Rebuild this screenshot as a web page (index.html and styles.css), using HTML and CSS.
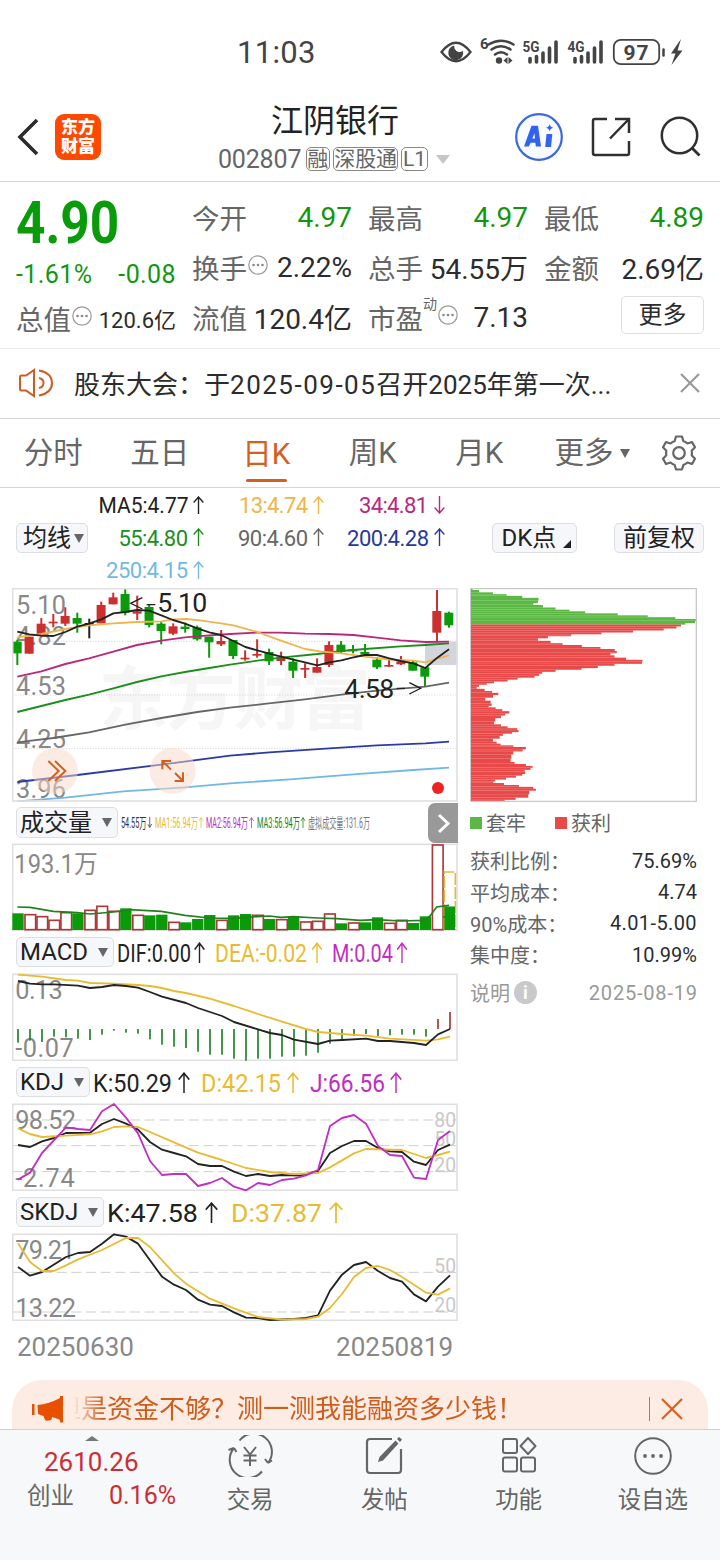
FILE: index.html
```html
<!DOCTYPE html>
<html lang="zh-CN">
<head>
<meta charset="utf-8">
<title>江阴银行 002807</title>
<link rel="stylesheet" href="styles.css">
</head>
<body>
<svg class="defs" width="0" height="0">
  <defs>
    <symbol id="up" viewBox="0 0 12 18" preserveAspectRatio="none"><path d="M6 18V1M.7 6.500L6 1L11.300 6.500" fill="none" stroke="currentColor" stroke-width="1.500"/></symbol>
    <symbol id="down" viewBox="0 0 12 18" preserveAspectRatio="none"><path d="M6 0V17M.7 11.500L6 17L11.300 11.500" fill="none" stroke="currentColor" stroke-width="1.500"/></symbol>
    <symbol id="more" viewBox="0 0 20 20"><circle cx="10" cy="10" r="9.200" fill="none" stroke="#999" stroke-width="1.200"/><g fill="#888"><circle cx="5.500" cy="10" r="1.300"/><circle cx="10" cy="10" r="1.300"/><circle cx="14.500" cy="10" r="1.300"/></g></symbol>
  </defs>
</svg>
<div class="phone">
  <div class="status">
    <span class="clock">11:03</span>
    <svg class="status-icons" width="250" height="32" viewBox="440 36 250 32">
      <g fill="none" stroke="#444" stroke-width="2.300">
        <path d="M441.500 52Q456 33.500 470.500 52Q456 70.500 441.500 52Z"/>
      </g>
      <path d="M454 45.500A7.500 7.500 0 1 0 463 51Q459 53 456.500 51Q454 49 454 45.500Z" fill="#444"/>
      <text x="480" y="49" class="st-s" textLength="7">6</text>
      <g fill="none" stroke="#444" stroke-width="2.500" stroke-linecap="round">
        <path d="M488.500 44.500Q501 37 513.500 44.500M491.500 49.500Q501 43 510.500 49.500M495 54.500Q501 50 507 54.500"/>
      </g>
      <circle cx="499" cy="60.500" r="3.200" fill="#444"/>
      <path d="M507.500 57v7l-4-3.500zM508.500 57v7l4-3.500z" fill="#444"/>
      <text x="522.500" y="52" class="st-s" textLength="17" lengthAdjust="spacingAndGlyphs">5G</text>
      <text x="567.500" y="52" class="st-s" textLength="17" lengthAdjust="spacingAndGlyphs">4G</text>
      <g stroke="#444" stroke-width="3.600" stroke-linecap="round">
        <path d="M530 58.500v3.500M536.500 56.500v5.500M543 53v9M549.500 48v14M556 42v20"/>
        <path d="M575 58.500v3.500M581.500 56.500v5.500M588 53v9M594.500 48v14M601 42v20"/>
      </g>
      <rect x="613.800" y="39.800" width="45.400" height="24.400" rx="7" fill="none" stroke="#444" stroke-width="1.800"/>
      <text x="623.500" y="59.500" class="st-b" textLength="25">97</text>
      <path d="M663.500 49.500v6" stroke="#444" stroke-width="2.500" stroke-linecap="round"/>
      <path d="M681 39L671 53.500H675.500L671.500 65L682.500 50.500H677.500Z" fill="#444"/>
    </svg>
  </div>

  <header class="head">
    <svg class="back" width="22" height="38" viewBox="0 0 22 38"><path d="M20 2L3 19L20 36" fill="none" stroke="#2c2c2e" stroke-width="3.600"/></svg>
    <div class="logo"><span>东方</span><span>财富</span></div>
    <div class="title">
      <h1>江阴银行</h1>
      <div class="sub"><span class="code">002807</span><span class="tag">融</span><span class="tag">深股通</span><span class="tag">L1</span><i class="tri"></i></div>
    </div>
    <svg class="head-icons" width="190" height="50" viewBox="514 112 190 50">
      <circle cx="539" cy="137" r="22.800" fill="#f8fbff" stroke="#3c69dc" stroke-width="2.200"/>
      <path d="M531.500 125.800H538L541 146.500H535.800L535.400 142.700H530.700L528.800 146.500H524Z" fill="#3262f0"/>
      <path d="M532.300 138.500H535L534.500 133.500Z" fill="#f8fbff"/>
      <path d="M546.500 134H552.300L551 147H545.200Z" fill="#3262f0"/>
      <path d="M549.700 124Q550.200 127.300 553.300 127.800Q550.200 128.300 549.700 131.500Q549 128.300 546 127.800Q549 127.300 549.700 124Z" fill="#3262f0"/>
      <g fill="none" stroke="#303030" stroke-width="2.500">
        <path d="M607 119H595Q593 119 593 121V153Q593 155 595 155H627Q629 155 629 153V141M615 119H629V133M629 119L610 138.500"/>
        <circle cx="679.500" cy="135.500" r="17.700"/><path d="M692 148L699.500 155.500" stroke-width="2.800"/>
      </g>
    </svg>
  </header>

  <section class="quote">
    <div class="lead">
      <div class="price"><b>4.90</b></div>
      <div class="chg"><span>-1.61%</span><span>-0.08</span></div>
      <div class="cell small"><label>总值<svg class="dots"><use href="#more"/></svg></label><span>120.6亿</span></div>
    </div>
    <div class="col">
      <div class="cell"><label>今开</label><span class="green">4.97</span></div>
      <div class="cell"><label>换手<svg class="dots"><use href="#more"/></svg></label><span>2.22%</span></div>
      <div class="cell"><label>流值</label><span>120.4亿</span></div>
    </div>
    <div class="col">
      <div class="cell"><label>最高</label><span class="green">4.97</span></div>
      <div class="cell"><label>总手</label><span>54.55万</span></div>
      <div class="cell"><label>市盈<sup>动</sup><svg class="dots"><use href="#more"/></svg></label><span>7.13</span></div>
    </div>
    <div class="col">
      <div class="cell"><label>最低</label><span class="green">4.89</span></div>
      <div class="cell"><label>金额</label><span>2.69亿</span></div>
      <div class="cell end"><button class="more-btn">更多</button></div>
    </div>
  </section>

  <section class="notice">
    <svg width="36" height="30" viewBox="0 0 36 30"><g fill="none" stroke="#cd5d24" stroke-width="2"><path d="M16 2L8 7.500H3.500Q2 7.500 2 9V21Q2 22.500 3.500 22.500H8L16 28Z"/><path d="M21 10Q25.500 11 25.500 15T21 20M21 2.500Q34 5 34 15T21 27.500"/></g></svg>
    <p>股东大会：于<span class="date">2025-09-05</span>召开2025年第一次...</p>
    <svg class="close" width="20" height="20" viewBox="0 0 20 20"><path d="M1 1L19 19M19 1L1 19" stroke="#999" stroke-width="2.200"/></svg>
  </section>

  <nav class="tabs">
    <span>分时</span><span>五日</span><span class="on">日K</span><span>周K</span><span>月K</span>
    <span class="more">更多<i></i></span>
    <svg width="36" height="36" viewBox="0 0 36 36"><g fill="none" stroke="#666" stroke-width="2.200" stroke-linejoin="round"><path d="M15 1.500H21L22.300 6Q24.800 7 26.500 8.500L31 7L34 12.300L30.700 15.700Q31.200 18 30.700 20.300L34 23.700L31 29L26.500 27.500Q24.800 29 22.300 30L21 34.500H15L13.700 30Q11.200 29 9.500 27.500L5 29L2 23.700L5.300 20.300Q4.800 18 5.300 15.700L2 12.300L5 7L9.500 8.500Q11.200 7 13.700 6Z"/><circle cx="18" cy="18" r="5.800"/></g></svg>
  </nav>

  <section class="averages">
    <button class="chip">均线<i class="caret"></i></button>
    <svg width="357" height="100" viewBox="92 488 357 100" font-size="22">
      <g color="#222" fill="#222"><text x="98.500" y="513.200" textLength="90" lengthAdjust="spacingAndGlyphs">MA5:4.77</text><use href="#up" x="193" y="496" width="11" height="18"/></g>
      <g color="#efb548" fill="#efb548"><text x="239" y="513.200" textLength="69">13:4.74</text><use href="#up" x="313" y="496" width="11" height="18"/></g>
      <g color="#b8287c" fill="#b8287c"><text x="359" y="513.200" textLength="69">34:4.81</text><use href="#down" x="434" y="496" width="11" height="18"/></g>
      <g color="#1b8e1b" fill="#1b8e1b"><text x="118.500" y="545.500" textLength="69.500">55:4.80</text><use href="#up" x="193" y="528" width="11" height="18"/></g>
      <g color="#666" fill="#666"><text x="238" y="545.500" textLength="70">90:4.60</text><use href="#up" x="313" y="528" width="11" height="18"/></g>
      <g color="#28389a" fill="#28389a"><text x="347" y="545.500" textLength="82">200:4.28</text><use href="#up" x="434" y="528" width="11" height="18"/></g>
      <g color="#72b8e6" fill="#72b8e6"><text x="106" y="578" textLength="82">250:4.15</text><use href="#up" x="193" y="561" width="11" height="18"/></g>
    </svg>
    <button class="chip dk">DK点<i class="corner"></i></button>
    <button class="chip adj">前复权</button>
  </section>

  <main class="board">
    <div class="charts">
      <svg class="panel" id="main" width="446" height="214" viewBox="36 24 1338 642">
        <text x="296" y="432" font-size="208" font-weight="700" fill="#f6f6f6" textLength="816">东方财富</text>
        <g stroke="#bbb" stroke-width="2" stroke-dasharray="3 5"><path d="M38 184H1370M38 345H1370M38 506H1370"/></g>
        <g class="scale"><text x="48" y="101" textLength="150">5.10</text><text x="48" y="195" textLength="150">4.82</text><text x="48" y="345" textLength="150">4.53</text><text x="48" y="503" textLength="150">4.25</text><text x="48" y="654" textLength="150">3.96</text></g>
        <rect x="1275" y="185" width="98" height="70" fill="#d2d6dc"/>
        <g id="candles"></g>
        <g class="lines">
          <polyline stroke="#72b8e6" points="52,664 196,653 370,634 555,622 690,610 870,598 1060,583 1240,570 1347,563"/>
          <polyline stroke="#2b3ba6" points="52,606 232,585 484,554 690,527 808,517 988,505 1131,496 1276,490 1347,485"/>
          <polyline stroke="#666" points="52,487 100,481 160,474 267,457 376,434 484,414 592,396 690,383 800,371 915,358 1024,344 1131,332 1276,320 1347,308"/>
          <polyline stroke="#1b8e1b" points="52,396 124,378 196,360 267,344 340,325 411,306 484,289 555,276 628,264 690,254 772,242 843,233 952,222 1024,213 1095,207 1202,199 1276,195 1347,190"/>
          <polyline stroke="#b8287c" points="52,290 124,274 196,252 267,235 340,215 411,195 484,182 555,172 628,166 690,162 770,158 840,158 915,161 988,162 1060,165 1131,173 1202,181 1276,186 1347,185"/>
          <polyline stroke="#efb548" points="52,172 124,162 196,147 267,136 340,130 411,126 484,124 519,118 560,117 600,121 663,130 700,136 772,156 843,182 915,207 960,214 1024,220 1095,230 1168,239 1240,242 1276,247 1312,236 1347,226"/>
          <polyline stroke="#222" points="52,155 88,163 124,167 160,168 196,156 232,140 267,131 304,118 340,100 376,96 411,90 447,92 484,106 519,120 555,131 592,145 628,157 663,165 700,183 736,201 772,211 808,221 843,230 880,239 915,247 952,256 988,247 1024,241 1060,232 1095,225 1131,225 1168,235 1202,243 1240,250 1276,264 1312,233 1347,208"/>
        </g>
        <g fill="none" stroke="#222" stroke-width="4"><path d="M427 53L392 70L427 87M440 74H466M1190 325H1215M1228 308L1262 325L1228 342"/></g>
        <g fill="#222" font-size="80"><text x="472" y="96" textLength="150">5.10</text><text x="1033" y="353" textLength="150">4.58</text></g>
        <g fill="#fbd9c6" opacity=".5"><circle cx="165" cy="573" r="69"/><circle cx="518" cy="573" r="69"/></g>
        <g fill="none" stroke="#d3601f" stroke-width="6"><path d="M145 543L176 573L145 603M165 543L196 573L165 603M487 568V543H513M489 545L513 569M525 579L549 603M524 603H549V577"/></g>
        <circle cx="1314" cy="624" r="18" fill="#ee2222"/>
        <rect class="frame" x="38" y="26" width="1333" height="637"/>
      </svg>

      <div class="legend">
        <button class="chip">成交量<i class="caret gap"></i></button>
        <svg width="254" height="41" viewBox="120 802 254 41" font-size="14">
          <g fill="#333"><text x="122" y="827.500" textLength="25.500" lengthAdjust="spacingAndGlyphs">54.55万</text></g><use href="#down" color="#333" x="148.500" y="817" width="4.500" height="11"/>
          <g fill="#e8bb32"><text x="156" y="827.500" textLength="43" lengthAdjust="spacingAndGlyphs">MA1:56.94万</text></g><use href="#up" color="#e8bb32" x="199.500" y="817" width="5" height="11"/>
          <g fill="#c02fc0"><text x="207" y="827.500" textLength="42" lengthAdjust="spacingAndGlyphs">MA2:56.94万</text></g><use href="#up" color="#c02fc0" x="250" y="817" width="5" height="11"/>
          <g fill="#178217"><text x="258" y="827.500" textLength="43" lengthAdjust="spacingAndGlyphs">MA3:56.94万</text></g><use href="#up" color="#178217" x="301.500" y="817" width="5" height="11"/>
          <text fill="#777" x="309" y="827.500" textLength="62" lengthAdjust="spacingAndGlyphs">虚拟成交量:131.6万</text>
        </svg>
        <span class="fold"><svg width="30" height="40" viewBox="0 0 30 40"><path d="M11 12L20 20.500L11 29" fill="none" stroke="#fff" stroke-width="3"/></svg></span>
      </div>
      <svg class="panel" width="446" height="88" viewBox="36 39 1338 264">
        <g class="scale"><text x="43" y="128" textLength="250" lengthAdjust="spacingAndGlyphs">193.1万</text></g>
        <rect class="frame" x="38" y="43" width="1333" height="258"/>
        <g id="volume"></g>
        <polyline fill="none" stroke="#22801f" stroke-width="5" points="52,231 90,232 160,244 232,248 270,252 340,246 390,239 484,244 555,256 628,264 700,265 772,260 808,258 843,262 880,260 952,264 1010,266 1080,271 1130,269 1202,273 1272,271 1290,258 1310,231 1347,226"/>
      </svg>

      <div class="legend low">
        <button class="chip">MACD<i class="caret gap"></i></button>
        <svg width="330" height="42" viewBox="116 931 330 42" font-size="26.500">
          <g color="#222" fill="#222"><text x="118" y="962" textLength="74" lengthAdjust="spacingAndGlyphs">DIF:0.00</text><use href="#up" x="195" y="942" width="11" height="21"/></g>
          <g color="#e8bb32" fill="#e8bb32"><text x="216" y="962" textLength="92" lengthAdjust="spacingAndGlyphs">DEA:-0.02</text><use href="#up" x="312.500" y="942" width="11" height="21"/></g>
          <g color="#c02fc0" fill="#c02fc0"><text x="333" y="962" textLength="61" lengthAdjust="spacingAndGlyphs">M:0.04</text><use href="#up" x="397.500" y="942" width="11" height="21"/></g>
        </svg>
      </div>
      <svg class="panel" width="446" height="88" viewBox="36 429 1338 264">
        <g class="scale"><text x="46" y="506" textLength="142">0.13</text><text x="46" y="682" textLength="175">-0.07</text></g>
        <rect class="frame" x="38" y="433" width="1333" height="258"/>
        <g id="macd"></g>
        <g class="lines">
          <polyline stroke="#e8bb32" points="54,434 126,440 198,450 234,452 270,459 342,461 414,465 450,468 486,474 522,483 558,489 630,506 702,528 774,552 846,575 918,597 954,606 1026,612 1098,617 1170,626 1278,632 1314,628 1350,620"/>
          <polyline stroke="#222" points="54,453 90,461 126,463 162,463 234,467 270,474 306,471 342,465 378,468 414,473 450,486 486,500 558,519 594,534 666,558 702,576 774,598 810,609 846,615 882,629 954,642 990,632 1026,630 1098,626 1134,633 1170,633 1242,639 1278,645 1314,613 1350,597"/>
        </g>
      </svg>

      <div class="legend low">
        <button class="chip">KDJ<i class="caret gap"></i></button>
        <svg width="350" height="42" viewBox="89 1061 350 42" font-size="26.500">
          <g color="#222" fill="#222"><text x="91" y="1092" textLength="79" lengthAdjust="spacingAndGlyphs">K:50.29</text><use href="#up" x="176" y="1072" width="12" height="21"/></g>
          <g color="#e8bb32" fill="#e8bb32"><text x="199" y="1092" textLength="80" lengthAdjust="spacingAndGlyphs">D:42.15</text><use href="#up" x="285" y="1072" width="12" height="21"/></g>
          <g color="#c02fc0" fill="#c02fc0"><text x="308" y="1092" textLength="75" lengthAdjust="spacingAndGlyphs">J:66.56</text><use href="#up" x="388" y="1072" width="12" height="21"/></g>
        </svg>
      </div>
      <svg class="panel" width="446" height="88" viewBox="36 69 1338 264">
        <g class="guide"><path d="M38 120H1370M38 197H1370M38 275H1370"/></g>
        <g class="scale"><text x="46" y="146" textLength="182">98.52</text><text x="46" y="321" textLength="178">-2.74</text></g>
        <g class="mark"><text x="1303" y="142">80</text><text x="1303" y="199">50</text><text x="1303" y="275">20</text></g>
        <rect class="frame" x="38" y="73" width="1333" height="258"/>
        <g class="lines">
          <polyline stroke="#222" points="54,195 90,201 126,184 162,174 198,159 270,158 306,132 342,117 378,131 414,149 450,186 486,209 522,219 558,229 594,252 630,258 666,258 702,275 738,288 774,282 810,288 846,285 900,287 954,273 990,219 1026,198 1062,183 1098,183 1134,204 1170,214 1206,216 1242,245 1278,255 1314,210 1350,194"/>
          <polyline stroke="#e8bb32" points="54,145 90,162 126,171 198,167 270,163 306,154 342,141 378,139 414,141 450,156 522,187 594,218 666,240 738,264 810,276 882,282 954,279 990,262 1062,220 1098,207 1206,210 1242,222 1278,234 1314,225 1350,215"/>
          <polyline stroke="#c02fc0" points="54,299 90,278 126,219 198,142 234,147 270,150 306,94 342,72 378,113 414,160 450,243 486,285 522,282 558,282 594,318 630,309 666,294 702,320 738,331 774,309 810,315 846,300 882,296 918,286 954,270 990,138 1026,114 1062,105 1098,131 1134,198 1170,225 1206,228 1242,293 1278,297 1314,180 1350,153"/>
        </g>
      </svg>

      <div class="legend low">
        <button class="chip">SKDJ<i class="caret gap"></i></button>
        <svg width="340" height="42" viewBox="103 1191 340 42" font-size="26.500">
          <g color="#222" fill="#222"><text x="105" y="1222" textLength="91" lengthAdjust="spacingAndGlyphs">K:47.58</text><use href="#up" x="203" y="1202" width="13" height="21"/></g>
          <g color="#e8bb32" fill="#e8bb32"><text x="229" y="1222" textLength="91" lengthAdjust="spacingAndGlyphs">D:37.87</text><use href="#up" x="327" y="1202" width="14" height="21"/></g>
        </svg>
      </div>
      <svg class="panel" width="446" height="88" viewBox="36 459 1338 264">
        <g class="guide"><path d="M38 577H1370M38 696H1370"/></g>
        <g class="scale"><text x="46" y="537" textLength="180">79.21</text><text x="46" y="711" textLength="182">13.22</text></g>
        <g class="mark"><text x="1303" y="579">50</text><text x="1303" y="697">20</text></g>
        <rect class="frame" x="38" y="463" width="1333" height="258"/>
        <g class="lines">
          <polyline stroke="#222" points="54,561 90,587 126,576 198,531 234,519 270,516 306,491 342,463 378,470 414,491 450,541 486,590 522,614 558,630 594,659 630,674 666,678 702,697 738,713 774,714 810,720 882,717 918,714 954,706 990,632 1026,584 1062,555 1098,546 1134,573 1170,594 1206,605 1242,643 1278,664 1314,620 1350,586"/>
          <polyline stroke="#e8bb32" points="54,490 90,546 126,573 162,573 198,556 234,538 306,510 378,474 414,474 450,501 522,580 558,611 630,656 702,685 774,711 846,719 918,717 954,710 990,684 1026,642 1062,591 1098,564 1134,558 1170,570 1206,591 1242,614 1278,638 1314,644 1350,625"/>
        </g>
      </svg>
      <div class="range"><span>20250630</span><span>20250819</span></div>
    </div>

    <aside class="cost">
      <svg width="227" height="214" viewBox="28 24 682 642" preserveAspectRatio="none">
        <g id="chips"></g>
        <path d="M29 26H708V664H29Z" fill="none" stroke="#c9c9c9" stroke-width="4"/>
      </svg>
      <div class="keys"><span><i class="g"></i>套牢</span><span><i class="r"></i>获利</span></div>
      <dl>
        <div><dt>获利比例：</dt><dd>75.69%</dd></div>
        <div><dt>平均成本：</dt><dd>4.74</dd></div>
        <div><dt>90%成本：</dt><dd class="wide">4.01-5.00</dd></div>
        <div><dt>集中度：</dt><dd>10.99%</dd></div>
      </dl>
      <div class="foot"><span>说明</span><i>i</i><time>2025-08-19</time></div>
    </aside>
  </main>

  <div class="banner">
    <svg width="31" height="27" viewBox="0 0 31 27"><path d="M0 8H2.500V19H0ZM5.500 9Q17 8 28 2V0H31V26.500H28V24Q24 22 20 21Q20 25 16 24.500Q13 26 11.500 20L6 18Z" fill="#e85000"/></svg>
    <div class="marquee"><span>但是资金不够？测一测我能融资多少钱！</span></div>
    <i class="bar"></i>
    <svg width="22" height="22" viewBox="0 0 22 22"><path d="M1 1L21 21M21 1L1 21" stroke="#d96020" stroke-width="2.200"/></svg>
  </div>

  <footer class="nav">
    <div class="index">
      <i class="peak"></i>
      <strong>2610.26</strong>
      <p><span>创业</span><em>0.16%</em></p>
    </div>
    <div class="item"><svg width="46" height="42" viewBox="0 0 46 42"><g fill="none" stroke="#666" stroke-width="2"><path d="M12.500 5.500A18 18 0 0 1 41 28M41 28L45 25.500M41 28L38 24M35 36.500A18 18 0 0 1 7 13M7 13L1.500 15M7 13L9.500 17"/><path d="M17 12L23 19.500L29 12M23 19.500V31M16.500 20.500H29.500M16.500 25.500H29.500"/></g></svg><span>交易</span></div>
    <div class="item"><svg width="42" height="42" viewBox="0 0 42 42"><path d="M29 4H7Q4 4 4 7V35Q4 38 7 38H35Q38 38 38 35V14" fill="none" stroke="#666" stroke-width="2.200"/><path d="M32.500 5.500L35.500 8.500L20 25.500L15 27L16.500 22ZM34 4L36 2L39 4.500L37 7Z" fill="#666"/></svg><span>发帖</span></div>
    <div class="item"><svg width="42" height="42" viewBox="0 0 42 42"><g fill="none" stroke="#666" stroke-width="2"><rect x="5" y="4" width="14" height="14" rx="2"/><rect x="5" y="22.500" width="14" height="14" rx="2"/><rect x="23" y="22.500" width="14" height="14" rx="2"/><path d="M30 3L37.500 11L30 19L22.500 11Z" stroke-linejoin="round"/></g></svg><span>功能</span></div>
    <div class="item"><svg width="42" height="42" viewBox="0 0 42 42"><circle cx="21" cy="21" r="17.800" fill="none" stroke="#666" stroke-width="2"/><g fill="#666"><circle cx="13" cy="21" r="1.900"/><circle cx="21" cy="21" r="1.900"/><circle cx="29" cy="21" r="1.900"/></g></svg><span>设自选</span></div>
  </footer>
</div>
<script src="charts.js"></script>
</body>
</html>
```
FILE: styles.css
```css
* { box-sizing: border-box; }
body { margin: 0; background: #fff; font-family: Roboto, "Noto Sans CJK SC", sans-serif; color: #2c2c2e; }
h1, p, dl, dd { margin: 0; }
button { font: inherit; color: inherit; padding: 0; }
i, em { font-style: normal; }
svg { display: block; flex: none; }
svg text { font-family: Roboto, "Noto Sans CJK SC", sans-serif; }
.defs { position: absolute; }
.phone { width: 720px; height: 1560px; overflow: hidden; display: flex; flex-direction: column; }
.phone > * { flex: none; }

.status { height: 92px; display: flex; align-items: flex-start; padding: 36px 30px 0 237px; }
.clock { font-size: 31px; line-height: 34px; color: #444; letter-spacing: .3px; width: 203px; }
.st-s { font-size: 15px; font-weight: 700; fill: #444; }
.st-b { font-size: 21px; font-weight: 700; fill: #444; }

.head { height: 90px; display: flex; align-items: center; border-bottom: 1px solid #d4d5d7; padding: 0 16px 0 17px; }
.logo { width: 46px; height: 46px; border-radius: 9px; margin-left: 16px; background: #ff4800; color: #fff; font-weight: 900; font-size: 17px; line-height: 19px; display: flex; flex-direction: column; align-items: center; justify-content: center; }
.title { width: 413px; padding-left: 104px; padding-right: 0; display: flex; flex-direction: column; align-items: center; width: 413px; padding-right: 53px; }
.title h1 { font-size: 32px; line-height: 44px; font-weight: 400; color: #222; padding-left: 4px; }
.sub { display: flex; align-items: center; height: 30px; font-size: 25px; color: #666; white-space: nowrap; margin-top: 1px; margin-right: -2px; }
.code { letter-spacing: -.15px; margin-right: 3px; }
.tag { font-size: 21px; line-height: 22px; height: 24px; border: 1.500px solid #888; border-radius: 5px; padding: 0 .5px; margin: 0 1.500px; }
.tag:nth-child(3) { letter-spacing: -.1px; }
.tri { border: 7px solid transparent; border-top: 9px solid #c6c6c6; border-bottom: 0; margin-left: 7px; }
.head-icons { margin-left: 0; }

.quote { height: 167px; padding: 10px 16px 0; display: grid; grid-template-columns: repeat(4, 160px); gap: 16px; border-bottom: 1px solid #ececec; }
.cell { height: 50px; display: flex; align-items: center; justify-content: space-between; font-size: 28px; white-space: nowrap; }
.cell label { color: #666; display: flex; align-items: center; font-size: 27.500px; }
.cell.end { justify-content: flex-end; }
.cell sup { font-size: 14px; align-self: flex-start; line-height: 14px; vertical-align: baseline; }
.green { color: #129612; }
.dots { width: 20px; height: 20px; margin-left: 1px; margin-top: -4px; }
.price { height: 62px; display: flex; align-items: center; }
.price b { font-size: 59px; line-height: 62px; color: #0a9b0a; transform: scaleX(.87); transform-origin: 0 50%; }
.chg { height: 40px; display: flex; align-items: center; justify-content: space-between; color: #129612; font-size: 25px; letter-spacing: .4px; }
.small { height: 48px; }
.small > span { font-size: 22px; }
.more-btn { width: 83px; height: 38px; margin-top: -4px; border: 1px solid #dedede; border-radius: 5px; background: #fff; font-size: 24px; line-height: 34px; }

.notice { height: 70px; display: flex; align-items: center; border-bottom: 1px solid #d4d5d7; padding: 0 20px 2px 18px; font-size: 26px; }
.notice p { margin-left: 20px; flex: 1; white-space: nowrap; }
.date { letter-spacing: 1.500px; }

.tabs { height: 69px; border-bottom: 1px solid #d4d5d7; display: flex; align-items: stretch; font-size: 29.500px; color: #666; }
.tabs > span { width: 106.500px; display: flex; align-items: center; justify-content: center; line-height: 69px; }
.tabs .on { color: #d3601f; flex-direction: column; line-height: 69px; }
.tabs .on::after { content: ""; width: 41px; height: 4px; border-radius: 2px; background: #d3601f; margin: -10px 0 5px; }
.tabs .on { padding-top: 1px; justify-content: flex-start; }
.tabs .more { justify-content: flex-start; padding-left: 22px; width: 128px; }
.tabs .more i { border: 5px solid transparent; border-top: 9px solid #666; border-bottom: 0; margin-left: 6px; }
.tabs svg { align-self: center; }

.averages { height: 100px; display: flex; align-items: center; padding: 0 16px; }
.chip { height: 30.500px; border: 1px solid #dcdee2; border-radius: 5px; background: #f6f7fa; font-size: 24px; line-height: 26px; padding: 0 5px; white-space: nowrap; color: #222; display: flex; align-items: center; }
.caret { border: 5px solid transparent; border-top: 9px solid #666; border-bottom: 0; margin-left: 3px; }
.caret.gap { margin-left: 10px; }
.averages .chip:first-child { width: 72px; margin-right: 4px; padding-left: 6px; }
.averages .dk { margin-left: 42.500px; width: 85px; padding-left: 9px; }
.corner { border-bottom: 8px solid #222; border-left: 8px solid transparent; align-self: flex-end; margin: 0 0 4px 7px; }
.averages .adj { margin-left: auto; padding: 0 8px; }

.board { display: flex; padding-left: 12px; gap: 12px; height: 792px; }
.charts { width: 446px; }
.panel { font-size: 78px; overflow: hidden; }
.panel .frame { fill: none; stroke: #e0e0e0; stroke-width: 5; }
.panel .scale { fill: #888; font-size: 76px; }
.panel .mark { fill: #c8c8c8; font-size: 58px; }
.panel .guide { fill: none; stroke: #cfcfcf; stroke-width: 3; stroke-dasharray: 30 14; }
.panel .lines { fill: none; stroke-width: 5.500; stroke-linejoin: round; }
.legend { height: 41px; display: flex; align-items: center; padding-left: 4px; }
.legend.low { height: 42px; }
.legend .chip { padding-left: 3px; padding-right: 5px; }
.legend svg { margin-left: 1px; }
.fold { margin-left: auto; background: #999; border-radius: 7px 0 0 7px; height: 40px; width: 30px; }
.fold svg { margin: 0; }
.range { display: flex; justify-content: space-between; padding: 0 5px; font-size: 26px; line-height: 52px; color: #888; }

.cost { width: 227px; font-size: 20px; color: #666; }
.keys { display: flex; gap: 29px; height: 41px; align-items: center; }
.keys span { display: flex; align-items: center; gap: 4px; width: 56px; white-space: nowrap; }
.keys i { width: 12px; height: 12px; flex: none; }
.g { background: #5cb845; }
.r { background: #e84a4a; }
.cost dl { padding-top: 2px; }
.cost dl div { display: flex; justify-content: space-between; height: 31.400px; align-items: center; white-space: nowrap; }
.cost dd { color: #2c2c2e; }
.cost .wide { letter-spacing: .4px; }
.foot { display: flex; align-items: center; height: 44px; color: #999; }
.foot i { width: 23px; height: 23px; border-radius: 50%; background: #c9c9c9; color: #fff; font-weight: 700; font-size: 18px; line-height: 23px; text-align: center; margin-left: 4px; }
.foot time { margin-left: auto; letter-spacing: .8px; margin-right: -.8px; }

.banner { margin: 0 12px; height: 49px; border-radius: 30px 30px 0 0; background: #fdece3; display: flex; align-items: center; padding: 9px 25px 0 20px; color: #cd5d1e; font-size: 26px; }
.marquee { width: 560px; margin-left: 10px; overflow: hidden; white-space: nowrap; line-height: 40px; -webkit-mask-image: linear-gradient(90deg, transparent, #000 30px); mask-image: linear-gradient(90deg, transparent, #000 30px); }
.marquee span { margin-left: -18px; }
.bar { width: 1.500px; height: 24px; background: #cd7040; margin-left: 16px; margin-right: 11px; }

.nav { height: 131px; background: #f7f8fa; border-top: 1px solid #d0d1d4; display: grid; grid-template-columns: 183px repeat(4, 1fr); color: #666; }
.item { display: flex; flex-direction: column; align-items: center; padding-top: 5px; font-size: 23.500px; }
.item span { line-height: 30px; margin-top: 8px; }
.index { padding-top: 6px; color: #cc2e36; }
.peak { display: block; width: 0; border: 7px solid transparent; border-bottom: 5px solid #777; border-top: 0; margin-left: 85px; }
.index strong { display: block; font-weight: 400; font-size: 26px; line-height: 32px; margin: 5px 0 0 44px; }
.index p { display: flex; padding: 0 7px 0 27px; justify-content: space-between; line-height: 36px; font-size: 25px; }
.index p span { color: #666; font-size: 23.500px; }
```
FILE: charts.js
```js
const RED = '#cc2f2f', GREEN = '#0a9a0a', DARK = '#222';
const rect = (x, y, w, h, extra) => `<rect x="${x}" y="${y}" width="${w}" height="${h}" ${extra}/>`;

// Candles: wick top, body top, body bottom, wick bottom, colour
const candles = [
  [180,185,220,255,'g'],[170,170,221,221,'r'],[114,131,168,170,'r'],[102,125,130,142,'r'],[82,108,131,138,'r'],
  [98,114,131,158,'g'],[116,129,134,175,'k'],[65,75,130,130,'r'],[38,52,73,73,'r'],[24,42,98,106,'g'],
  [47,94,101,120,'r'],[72,81,135,142,'g'],[125,131,153,193,'g'],[130,139,161,165,'r'],[128,140,147,158,'g'],
  [137,142,178,182,'g'],[170,170,187,233,'g'],[150,183,193,198,'r'],[180,180,228,237,'g'],[211,233,238,242,'r'],
  [178,222,227,233,'r'],[206,216,244,255,'g'],[215,230,243,255,'r'],[235,245,272,294,'g'],[250,264,269,294,'r'],
  [235,261,278,278,'r'],[184,195,255,261,'r'],[183,194,216,220,'g'],[195,207,214,220,'g'],[192,216,224,228,'g'],
  [231,239,262,267,'g'],[240,255,260,260,'r'],[228,244,253,255,'r'],[240,247,272,272,'g'],[262,262,290,318,'g'],
  [30,93,158,186,'r'],[95,98,136,143,'g']
];
const tone = { r: RED, g: GREEN, k: DARK };
document.getElementById('candles').innerHTML = candles.map(([a, b, c, d, k], i) => {
  const x = 52 + i * 35.97;
  return rect(x - 3, a, 6, d - a, `fill="${tone[k]}"`) + rect(x - 14, b, 27, c - b, `fill="${tone[k]}"`);
}).join('');

// Volume bars: top edge and direction
const vol = 'g250 r253 r259 r270 r247 g250 r240 r228 r243 g235 r255 g256 g254 r276 g277 g267 g255 r270 g256 g252 r255 g267 r268 g260 r275 r273 r251 g280 r278 g277 g262 r279 r270 g279 g259 r44 g230'.split(' ');
document.getElementById('volume').innerHTML = vol.map((v, i) => {
  const x = 36 + i * 35.95, y = +v.slice(1);
  return v[0] === 'g'
    ? rect(x + 1, y, 34, 300 - y, `fill="${GREEN}"`)
    : rect(x + 3, y + 1, 32, 298 - y, 'fill="#fff" stroke="#ad3a3a" stroke-width="5"');
}).join('') + '<path d="M1333 300V126H1366V300" fill="none" stroke="#e8bb32" stroke-width="5" stroke-dasharray="36 6"/>' + rect(1333, 230, 32, 70, `fill="${GREEN}"`);

// MACD histogram around the zero line
const ends = [638,632,636,620,622,626,630,614,602,608,611,628,644,650,654,665,674,674,686,692,686,686,680,680,677,668,641,628,618,612,618,616,614,614,620,567,546];
document.getElementById('macd').innerHTML = ends.map((e, i) =>
  rect(51.5 + i * 36, Math.min(e, 597), 5, Math.abs(e - 597), `fill="${e < 597 ? '#a23434' : '#22802a'}"`)).join('');

// Cost distribution: y, bar end
const dist = '26,36 34,55 40,97 45,138 50,185 57,234 66,232 72,218 78,247 87,285 91,327 97,374 103,472 109,562 114,645 120,708 126,704 131,675 136,662 142,648 148,610 154,518 160,423 165,332 171,262 178,232 187,270 192,306 198,364 204,420 210,463 216,469 222,450 230,462 236,497 243,546 248,545 254,462 261,412 267,363 272,285 278,245 284,236 290,222 296,171 301,141 307,100 312,78 317,55 323,48 330,72 336,94 341,113 348,97 358,74 366,90 375,93 379,84 385,105 390,125 397,146 403,134 409,121 419,104 430,100 436,121 442,141 447,170 454,174 458,154 464,127 470,117 482,97 488,108 494,120 498,158 504,196 511,186 516,158 530,152 543,150 549,162 555,196 561,216 566,210 572,192 579,194 584,185 590,166 595,136 602,104 606,98 612,130 618,175 623,218 629,226 635,206 650,203 656,165 662,132'.split(' ').map(p => p.split(',').map(Number));
let rows = '';
dist.forEach(([y, x], i) => {
  const top = i ? (dist[i - 1][0] + y) / 2 : 24;
  const bottom = i < dist.length - 1 ? (dist[i + 1][0] + y) / 2 : 665;
  rows += rect(28, top, x - 28, bottom - top + .5, `fill="${y < 133 ? '#5cb845' : '#e84a4a'}"`);
  if (i % 2) rows += rect(28, bottom - 1, x - 30, 1.5, `fill="${y < 133 ? '#a2dc90' : '#f59c9c'}"`);
});
document.getElementById('chips').innerHTML = rows;
```
